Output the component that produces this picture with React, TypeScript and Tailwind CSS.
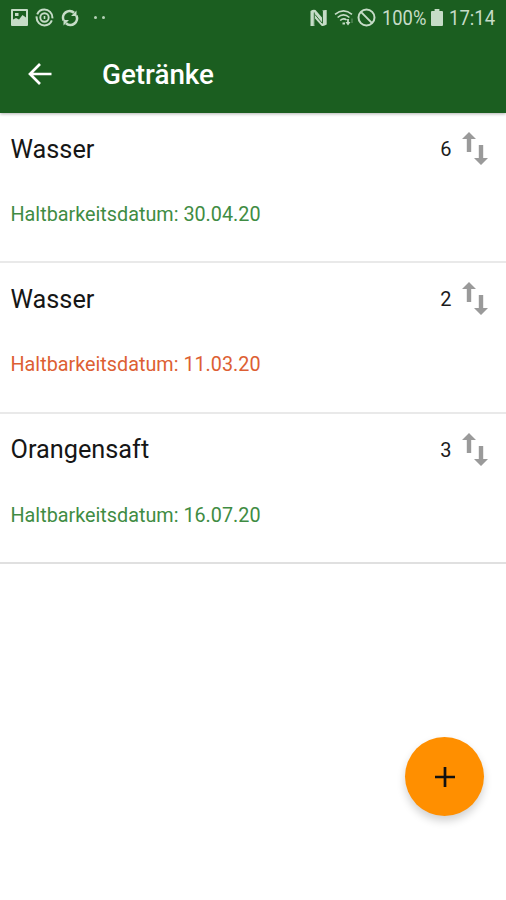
import React from "react";

type Item = {
  id: number;
  name: string;
  amount: number;
  date: string;
  expired: boolean;
};

const items: Item[] = [
  { id: 1, name: "Wasser", amount: 6, date: "30.04.20", expired: false },
  { id: 2, name: "Wasser", amount: 2, date: "11.03.20", expired: true },
  { id: 3, name: "Orangensaft", amount: 3, date: "16.07.20", expired: false },
];

const StatusBar = () => {
  return (
    <div className="flex h-[35px] items-center justify-between px-[11px] text-[#c6dcc7]">
      <div className="flex items-center">
        {/* picture */}
        <svg width="17" height="17" viewBox="0 0 17 17">
          <path
            fill="currentColor"
            fillRule="evenodd"
            d="M1 0h15a1 1 0 0 1 1 1v15a1 1 0 0 1-1 1H1a1 1 0 0 1-1-1V1a1 1 0 0 1 1-1zM2 2v8.5l3-1.5 3 1.5L11.5 6l3.500 2.500V2zM4 4h3.500v3H4z"
          />
        </svg>
        {/* target */}
        <svg className="ml-[7px]" width="19" height="19" viewBox="0 0 19 19" fill="none" stroke="currentColor">
          <circle cx="9.5" cy="9.5" r="7.900" strokeWidth="2" strokeDasharray="22.800 2" strokeDashoffset="-3" />
          <circle cx="9.5" cy="9.5" r="4.2" strokeWidth="1.9" />
          <path d="M9.500 8v3" strokeWidth="1.6" />
        </svg>
        {/* sync */}
        <svg className="ml-[7px]" width="18" height="18" viewBox="0 0 18 18">
          <g fill="none" stroke="currentColor" strokeWidth="2.6">
            <path d="M2.600 11.500A6.600 6.600 0 0 1 13 3.800" />
            <path d="M15.400 6.500A6.600 6.600 0 0 1 5 14.200" />
          </g>
          <path fill="currentColor" d="M15.500 1.500v5.500H10zM2.500 16.500V11H8z" />
        </svg>
        <div className="ml-[15px] flex gap-[5px]">
          <span className="size-[3px] rounded-full bg-[#b5d0b6]" />
          <span className="size-[3px] rounded-full bg-[#b5d0b6]" />
        </div>
      </div>

      <div className="flex items-center">
        {/* nfc */}
        <svg width="17" height="18" viewBox="0 0 17 18">
          <path
            fill="currentColor"
            d="M.5 2Q3 .2 5.500 1L12 8.500V1.500Q14.500.7 16.700 1v14.500Q14 17.500 11.500 16.800L5 9.500v7Q2.500 17.300.5 17z"
          />
          <path d="M4.300 3.500v13M12.500 1.500v13M5 5.500l7 8.500" fill="none" stroke="#1b5e20" strokeWidth="0.9" />
        </svg>
        {/* wifi */}
        <svg className="ml-[7px]" width="20" height="18" viewBox="0 0 20 18" fill="none" stroke="currentColor">
          <path d="M1 5.300Q9.500-1.600 18 5.300" strokeWidth="1.6" />
          <path d="M3.600 8.500Q9.500 3.300 15.400 8.500" strokeWidth="1.6" />
          <path d="M6.200 11.500Q9.500 8.500 12.600 11" strokeWidth="1.6" />
          <path d="M8.500 14.500h2.500" strokeWidth="2" />
          <path d="M14 10v4" strokeWidth="1.8" />
          <path d="M11.500 13h5L14 16.500z" fill="currentColor" stroke="none" />
          <path d="M18 14V9.500" strokeWidth="1.2" opacity=".4" />
        </svg>
        {/* blocked */}
        <svg className="ml-[3px]" width="19" height="19" viewBox="0 0 19 19" fill="none" stroke="currentColor" strokeWidth="2">
          <circle cx="9.5" cy="9.5" r="8" />
          <path d="M3.900 3.900l11.200 11.200" />
        </svg>
        <span className="ml-[6px] w-[44px] pt-[2px] text-[19.5px] leading-none">
          <span className="inline-block origin-left scale-x-[0.94]">100%</span>
        </span>
        {/* battery */}
        <svg className="ml-[5px]" width="12" height="17" viewBox="0 0 12 17">
          <path fill="currentColor" d="M3.600 0h4.800v2H11a1 1 0 0 1 1 1v13a1 1 0 0 1-1 1H1a1 1 0 0 1-1-1V3a1 1 0 0 1 1-1h2.600z" />
        </svg>
        <span className="ml-[6px] w-[46px] pt-[2px] text-[19.5px] leading-none">
          <span className="inline-block origin-left scale-x-[0.95]">17:14</span>
        </span>
      </div>
    </div>
  );
};

const SortIcon = () => (
  <svg width="26" height="33" viewBox="0 0 26 33" fill="#9a9a9a">
    <path d="M7 0l7 7H9.200v13H4.800V7H0z" />
    <path d="M19 33l-7-7h4.800V13h4.400v13H26z" />
  </svg>
);

const App = () => {
  return (
    <div className="relative h-[900px] w-[506px] overflow-hidden bg-white font-['Roboto',sans-serif]">
      <header className="relative h-[113px] bg-[#1b5e20] shadow-[0_1px_3px_rgba(0,0,0,0.3)]">
        <StatusBar />
        <div className="flex h-[77px] items-center pl-7">
          <button type="button" aria-label="Zurück">
            <svg width="24" height="22" viewBox="0 0 24 22" fill="none" stroke="#fff" strokeWidth="2.7">
              <path d="M23.500 11H2.500M12 1L2 11l10 10" />
            </svg>
          </button>
          <h1 className="ml-[50px] pt-[2px] text-[27.8px] font-medium leading-none text-white">Getränke</h1>
        </div>
      </header>

      <ul>
        {items.map((item) => (
          <li
            key={item.id}
            className="flex h-[150.4px] flex-col border-b-2 border-[#e9e9e9] pl-[10.5px] pr-[18.5px] last:border-[#e0e0e0]"
          >
            <div className="flex h-[72px] items-center justify-between">
              <span className="pt-px text-[25.3px] text-[#161616]">{item.name}</span>
              <div className="flex items-center gap-[10px]">
                <span className="text-[20px] text-[#1c1c1c]">{item.amount}</span>
                <span className="pb-px">
                  <SortIcon />
                </span>
              </div>
            </div>
            <p
              className={`mt-4 text-[19.8px] leading-[28px] ${item.expired ? "text-[#dd5f33]" : "text-[#3f8c43]"}`}
            >
              Haltbarkeitsdatum: {item.date}
            </p>
          </li>
        ))}
      </ul>

      <button
        type="button"
        aria-label="Hinzufügen"
        className="absolute left-[405px] top-[737px] flex size-[79px] items-center justify-center rounded-full bg-[#ff8f00] shadow-[0_5px_9px_rgba(0,0,0,0.18)]"
      >
        <svg width="20" height="20" viewBox="0 0 20 20" stroke="#111" strokeWidth="2.7">
          <path d="M10 0v20M0 10h20" />
        </svg>
      </button>
    </div>
  );
};

export default App;
